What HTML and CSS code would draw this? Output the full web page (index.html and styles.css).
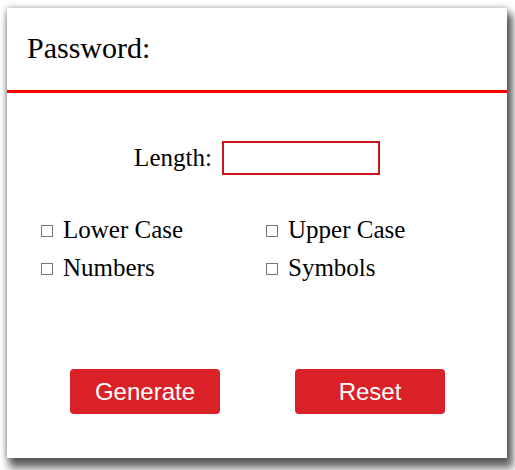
FILE: index.html
```html
<!DOCTYPE html>
<html>
<head>
<meta charset="utf-8">
<link rel="stylesheet" href="styles.css">
</head>
<body>
<div class="card">
  <div class="header">Password:</div>
  <div class="content">
    <div class="length-row">
      <label class="length-label">Length:</label>
      <span class="length-input"></span>
    </div>
    <div class="options">
      <div class="option"><span class="box"></span>Lower Case</div>
      <div class="option"><span class="box"></span>Upper Case</div>
      <div class="option"><span class="box"></span>Numbers</div>
      <div class="option"><span class="box"></span>Symbols</div>
    </div>
    <div class="buttons">
      <div class="btn">Generate</div>
      <div class="btn">Reset</div>
    </div>
  </div>
</div>
</body>
</html>
```
FILE: styles.css
```css
html, body {
  margin: 0;
  padding: 0;
  background: #fff;
}
body {
  padding: 8px 0 16px 7px;
  font-family: "Liberation Serif", "Times New Roman", serif;
  color: #000;
}
.card {
  width: 500px;
  height: 450px;
  background: #fff;
  box-shadow: 0 0 6px rgba(0,0,0,0.35), 4px 8px 8px 2px rgba(0,0,0,0.6);
  box-sizing: border-box;
}
.header {
  height: 85px;
  box-sizing: border-box;
  border-bottom: 3px solid #f00;
  font-size: 30px;
  padding: 20px 0 0 20px;
  line-height: 40px;
}
.content {
  display: flex;
  flex-direction: column;
}
.length-row {
  display: flex;
  justify-content: center;
  align-items: center;
  margin-top: 48px;
  gap: 10px;
  padding-left: 0;
}
.length-label {
  font-size: 25px;
}
.length-input {
  width: 158px;
  height: 34px;
  box-sizing: border-box;
  border: 2px solid #c4161c;
}
.options {
  display: grid;
  grid-template-columns: 225px 225px;
  row-gap: 9px;
  margin-top: 40px;
  padding-left: 34px;
}
.option {
  display: flex;
  align-items: center;
  font-size: 25px;
  line-height: 29px;
}
.box {
  width: 10px;
  height: 10px;
  border: 1px solid #777;
  margin-right: 10px;
  margin-top: 2px;
}
.buttons {
  display: flex;
  gap: 75px;
  margin-top: 87px;
  padding-left: 63px;
}
.btn {
  width: 150px;
  height: 45px;
  border-radius: 4px;
  background: #da2127;
  color: #fff;
  font-family: "Liberation Sans", Arial, sans-serif;
  font-size: 24px;
  display: flex;
  align-items: center;
  justify-content: center;
}
```
